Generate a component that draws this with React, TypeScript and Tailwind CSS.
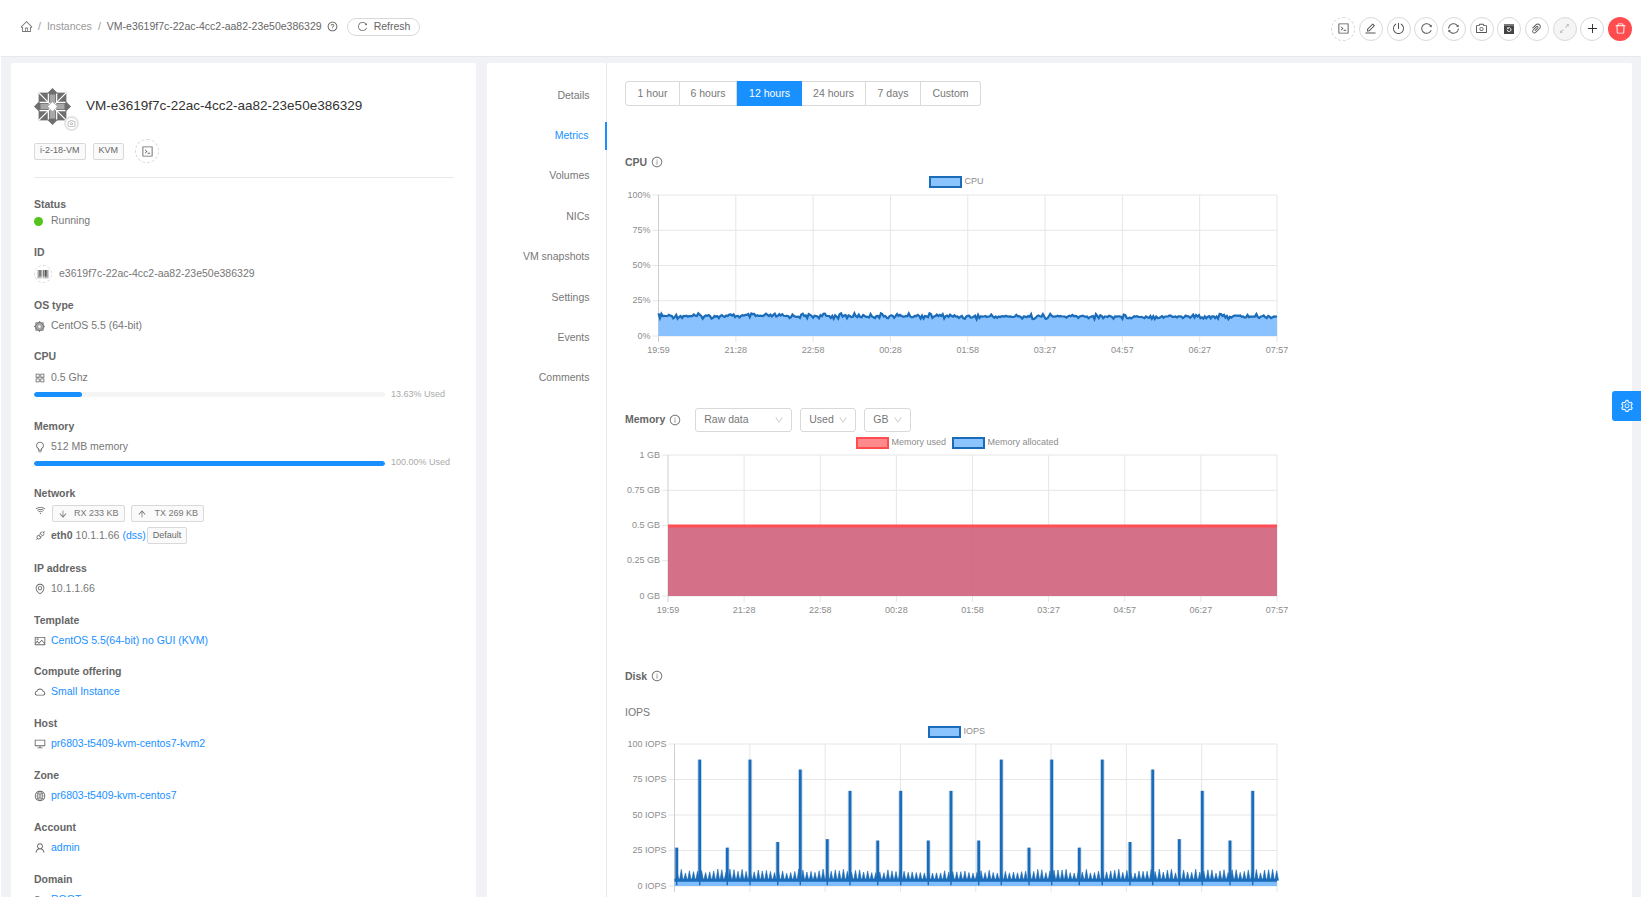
import React from "react";
import {
  AiOutlineHome,
  AiOutlineQuestionCircle,
  AiOutlineReload,
  AiOutlineCode,
  AiOutlineEdit,
  AiOutlinePoweroff,
  AiOutlineSync,
  AiOutlineCamera,
  AiOutlinePaperClip,
  AiOutlineArrowsAlt,
  AiOutlinePlus,
  AiOutlineDelete,
  AiOutlineBarcode,
  AiOutlineAppstore,
  AiOutlineBulb,
  AiOutlineWifi,
  AiOutlineArrowDown,
  AiOutlineArrowUp,
  AiOutlineApi,
  AiOutlineEnvironment,
  AiOutlinePicture,
  AiOutlineCloud,
  AiOutlineDesktop,
  AiOutlineGlobal,
  AiOutlineUser,
  AiOutlineInfoCircle,
  AiOutlineDown,
  AiOutlineSetting,
  AiOutlineFolder,
} from "react-icons/ai";

const VM_NAME = "VM-e3619f7c-22ac-4cc2-aa82-23e50e386329";
const TIMES = ["19:59", "21:28", "22:58", "00:28", "01:58", "03:27", "04:57", "06:27", "07:57"];

// small seeded noise so the charts look the same on every load
const noise = (i: number) => {
  const v = Math.sin(i * 12.9898) * 43758.5453;
  return v - Math.floor(v);
};

const CentosLogo = ({ size }: { size: number }) => (
  <svg width={size} height={size} viewBox="0 0 40 40" className="shrink-0">
    <g fill="#6e6e6e">
      <rect x="5" y="5" width="30" height="30" />
      <path d="M20 0l7 7H13zM20 40l7-7H13zM0 20l7-7v14zM40 20l-7-7v14z" />
    </g>
    <g fill="#a8a8a8">
      <path d="M17 7h6v9l-3 3-3-3zM17 33h6v-9l-3-3-3 3zM7 17v6h9l3-3-3-3zM33 17v6h-9l-3-3 3-3z" />
    </g>
    <g stroke="#fff" strokeWidth="1.3" fill="none">
      <path d="M5 5l30 30M35 5L5 35" />
      <path d="M15.5 6v9.5H6M24.5 6v9.5H34M15.5 34v-9.5H6M24.5 34v-9.5H34" />
    </g>
    <path d="M20 15l5 5-5 5-5-5z" fill="#fff" />
  </svg>
);

const CircleBtn = ({
  children,
  dashed,
  danger,
  disabled,
}: {
  children: React.ReactNode;
  dashed?: boolean;
  danger?: boolean;
  disabled?: boolean;
}) => (
  <div
    className={`flex items-center justify-center w-[24px] h-[24px] rounded-full text-[13px] ${
      danger
        ? "bg-[#ff4d4f] text-white"
        : disabled
          ? "bg-[#f5f5f5] border border-[#d9d9d9] text-[#bfbfbf]"
          : dashed
            ? "border border-dashed border-[#d9d9d9] text-[#555]"
            : "border border-[#d9d9d9] text-[#555]"
    }`}
  >
    {children}
  </div>
);

const BackupIcon = () => (
  <svg width="12" height="12" viewBox="0 0 12 12">
    <rect x="1" y="1" width="10" height="10" fill="#444" />
    <rect x="1" y="1" width="10" height="2" fill="#777" />
    <path d="M4.2 6.8a1.9 1.9 0 1 0 .6-1.6M4.4 4.4v1.2h1.2" fill="none" stroke="#fff" strokeWidth="0.9" />
  </svg>
);

const Tag = ({ children, className = "" }: { children: React.ReactNode; className?: string }) => (
  <span
    className={`inline-flex items-center h-[17px] px-[5px] border border-[#d9d9d9] rounded-[2px] bg-[#fafafa] text-[9px] text-[#666] ${className}`}
  >
    {children}
  </span>
);

const Row = ({
  label,
  icon,
  children,
  className = "",
  link,
}: {
  label: string;
  icon: React.ReactNode;
  children: React.ReactNode;
  className?: string;
  link?: boolean;
}) => (
  <div className={className}>
    <div className="h-[16px] leading-[16px] font-bold text-[#666]">{label}</div>
    <div className={`flex items-center gap-[5px] mt-[5px] h-[16px] ${link ? "text-[#1890ff]" : ""}`}>
      <span className="flex justify-center w-[12px] text-[12px] text-[#666] shrink-0">{icon}</span>
      <span>{children}</span>
    </div>
  </div>
);

const Bar = ({ pct, label }: { pct: number; label: string }) => (
  <div className="flex items-center mt-[3.5px] h-[10px]">
    <div className="w-[351px] h-[5px] rounded-full bg-[#f5f5f5] overflow-hidden">
      <div className="h-full rounded-full bg-[#1890ff]" style={{ width: `${pct}%` }} />
    </div>
    <span className="ml-[6px] text-[9px] text-[#aaa]">{label}</span>
  </div>
);

const Sidebar = () => (
  <aside className="w-[465px] shrink-0 bg-white rounded-[2px] px-[23px] pt-[25px] text-[10.5px] text-[#777] h-[900px] overflow-hidden">
    <div className="flex items-center gap-[15px]">
      <div className="relative w-[37px] h-[37px]">
        <CentosLogo size={37} />
        <div className="absolute -right-[8px] -bottom-[6px] flex items-center justify-center w-[15px] h-[15px] rounded-full bg-white border-2 border-[#e4e4e4] text-[9px] text-[#999]">
          <AiOutlineCamera />
        </div>
      </div>
      <h1 className="text-[13.5px] text-[#333] -mt-[1px]">{VM_NAME}</h1>
    </div>
    <div className="flex items-center gap-[7px] mt-[14px]">
      <Tag>i-2-18-VM</Tag>
      <Tag className="px-[5.5px]">KVM</Tag>
      <div className="ml-[4px] flex items-center justify-center w-[24px] h-[24px] rounded-full border border-dashed border-[#d9d9d9] text-[13px] text-[#666]">
        <AiOutlineCode />
      </div>
    </div>
    <div className="h-px bg-[#e8e8e8] mt-[14px] w-[420px]" />

    <div className="mt-[19px]">
      <div className="h-[14px] leading-[14px] font-bold text-[#666]">Status</div>
      <div className="flex items-center gap-[8px] mt-[2px] h-[16px]">
        <span className="w-[9px] h-[9px] rounded-full bg-[#52c41a]" />
        <span>Running</span>
      </div>
    </div>

    <div className="mt-[16px]">
      <div className="h-[14px] leading-[14px] font-bold text-[#666]">ID</div>
      <div className="flex items-center gap-[7px] mt-[6px] h-[18px]">
        <span className="flex items-center justify-center w-[18px] h-[18px] rounded-full border border-dashed border-[#d9d9d9] text-[12px] text-[#555]">
          <AiOutlineBarcode />
        </span>
        <span>e3619f7c-22ac-4cc2-aa82-23e50e386329</span>
      </div>
    </div>

    <div className="mt-[15px]">
      <div className="h-[14px] leading-[14px] font-bold text-[#666]">OS type</div>
      <div className="flex items-center gap-[6px] mt-[6px] h-[16px]">
        <CentosLogo size={11} />
        <span>CentOS 5.5 (64-bit)</span>
      </div>
    </div>

    <Row label="CPU" icon={<AiOutlineAppstore />} className="mt-[14px] [&>div:last-child]:mt-[6px]">
      0.5 Ghz
    </Row>
    <Bar pct={13.63} label="13.63% Used" />

    <Row label="Memory" icon={<AiOutlineBulb />} className="mt-[18px]">
      512 MB memory
    </Row>
    <Bar pct={100} label="100.00% Used" />

    <div className="mt-[17px]">
      <div className="h-[16px] leading-[16px] font-bold text-[#666]">Network</div>
      <div className="flex items-start gap-[6px] mt-[4px]">
        <span className="flex justify-center w-[12px] text-[11px] text-[#666]">
          <AiOutlineWifi />
        </span>
        <Tag className="text-[#777] gap-[6px]">
          <AiOutlineArrowDown className="text-[10px]" /> RX 233 KB
        </Tag>
        <Tag className="text-[#777] gap-[8px]">
          <AiOutlineArrowUp className="text-[10px]" /> TX 269 KB
        </Tag>
      </div>
      <div className="flex items-center mt-[5px]">
        <span className="flex justify-center w-[12px] text-[11px] text-[#666]">
          <AiOutlineApi />
        </span>
        <span className="ml-[5px] font-bold text-[#666]">eth0</span>
        <span className="ml-[3px]">10.1.1.66</span>
        <span className="ml-[3px] text-[#1890ff]">(dss)</span>
        <Tag className="ml-px text-[#666]">Default</Tag>
      </div>
    </div>

    <Row label="IP address" icon={<AiOutlineEnvironment />} className="mt-[16px]">
      10.1.1.66
    </Row>
    <Row label="Template" icon={<AiOutlinePicture />} link className="mt-[15px]">
      CentOS 5.5(64-bit) no GUI (KVM)
    </Row>
    <Row label="Compute offering" icon={<AiOutlineCloud />} link className="mt-[14px]">
      Small Instance
    </Row>
    <Row label="Host" icon={<AiOutlineDesktop />} link className="mt-[15px]">
      pr6803-t5409-kvm-centos7-kvm2
    </Row>
    <Row label="Zone" icon={<AiOutlineGlobal />} link className="mt-[15px]">
      pr6803-t5409-kvm-centos7
    </Row>
    <Row label="Account" icon={<AiOutlineUser />} link className="mt-[15px]">
      admin
    </Row>
    <Row label="Domain" icon={<AiOutlineFolder />} link className="mt-[14.5px]">
      ROOT
    </Row>
  </aside>
);

const GRID = "#e6e6e6";
const TICK = "#8c8c8c";

const Legend = ({ x, y, fill, stroke, text }: { x: number; y: number; fill: string; stroke: string; text: string }) => (
  <g>
    <rect x={x} y={y} width={31} height={10} fill={fill} stroke={stroke} strokeWidth={2} />
    <text x={x + 34.5} y={y + 7} fontSize={9} fill="#8c8c8c">
      {text}
    </text>
  </g>
);

// svg coordinates below are relative to the chart column, y=0 is the top of the legend row
const Axes = ({
  left,
  top,
  bottom,
  yLabels,
  right = 652,
  showTimes = true,
}: {
  left: number;
  top: number;
  bottom: number;
  yLabels: string[];
  right?: number;
  showTimes?: boolean;
}) => {
  const stepX = (right - left) / 8;
  const stepY = (bottom - top) / (yLabels.length - 1);
  return (
    <g fontSize={9} fill={TICK} textAnchor="end">
      {yLabels.map((l, i) => (
        <g key={l}>
          <line x1={left - 6} x2={right} y1={top + i * stepY} y2={top + i * stepY} stroke={GRID} />
          <text x={left - 8} y={top + i * stepY + 2.5}>
            {l}
          </text>
        </g>
      ))}
      {TIMES.map((t, i) => (
        <g key={t}>
          <line
            x1={left + i * stepX}
            x2={left + i * stepX}
            y1={top}
            y2={bottom + 6}
            stroke={i === 0 ? "#cfcfcf" : GRID}
          />
          {showTimes && (
            <text x={left + i * stepX} y={bottom + 16.5} textAnchor="middle">
              {t}
            </text>
          )}
        </g>
      ))}
    </g>
  );
};

const CpuChart = () => {
  const left = 33.5;
  const right = 652;
  const pts: string[] = [];
  for (let i = 0; i <= 420; i++) {
    const x = left + ((right - left) * i) / 420;
    const n = noise(i) - 0.5;
    const jitter = n * Math.abs(n) * 11 + (i < 200 ? -0.5 : 0);
    pts.push(`${x.toFixed(1)},${(142.5 + jitter).toFixed(1)}`);
  }
  return (
    <svg width={670} height={190} className="block" fontFamily="Liberation Sans, sans-serif">
      <Legend x={305} y={3} fill="#8cc4ff" stroke="#1a6bb8" text="CPU" />
      <Axes left={left} top={21} bottom={162} yLabels={["100%", "75%", "50%", "25%", "0%"]} />
      <polygon points={`${left},162 ${pts.join(" ")} ${right},162`} fill="#7fbdff" fillOpacity={0.92} />
      <polyline points={pts.join(" ")} fill="none" stroke="#1a6bb8" strokeWidth={2.2} />
    </svg>
  );
};

const MemoryChart = () => (
  <svg width={670} height={190} className="block" fontFamily="Liberation Sans, sans-serif">
    <Legend x={232} y={4} fill="#ff8a8c" stroke="#ff4d4f" text="Memory used" />
    <Legend x={328} y={4} fill="#8cc4ff" stroke="#1a6bb8" text="Memory allocated" />
    <Axes left={43} top={21} bottom={162} yLabels={["1 GB", "0.75 GB", "0.5 GB", "0.25 GB", "0 GB"]} />
    <rect x={43} y={92} width={609} height={70} fill="#d0657f" fillOpacity={0.92} />
    <line x1={43} x2={652} y1={92} y2={92} stroke="#ff4d55" strokeWidth={3} />
  </svg>
);

// peak positions and heights read off the picture, in page pixels and percent
const SPIKES: [number, number][] = [
  [676.7, 27], [699.7, 89], [727.3, 27], [750, 89], [777.7, 31], [800.3, 82], [827.3, 33], [850, 67],
  [877.7, 32], [900.7, 67], [928.3, 32], [951, 67], [978.7, 32], [1001.3, 89], [1029, 27], [1051.7, 89],
  [1079.3, 27], [1102.3, 89], [1130, 31], [1152.7, 82], [1179.3, 33], [1202.3, 67], [1230, 32], [1252.7, 67],
];

const IopsChart = () => {
  const ox = 625; // drawing origin on the page
  const left = 674.5 - ox;
  const right = 1277 - ox;
  const top = 32;
  const bottom = 174;
  const val = (v: number) => bottom - (v / 100) * (bottom - top);
  const base = val(4);
  const small: string[] = [];
  for (let x = left + 1, i = 0; x < right; x += 4.05, i++) {
    const h = 9 + noise(i) * 3;
    small.push(`${x.toFixed(1)},${base} ${(x + 1.8).toFixed(1)},${val(h).toFixed(1)} ${(x + 3.6).toFixed(1)},${base}`);
  }
  return (
    <svg width={670} height={184} className="block" fontFamily="Liberation Sans, sans-serif">
      <Legend x={304} y={15} fill="#8cc4ff" stroke="#1a6bb8" text="IOPS" />
      <Axes left={left} top={top} bottom={bottom} right={right} showTimes={false} yLabels={["100 IOPS", "75 IOPS", "50 IOPS", "25 IOPS", "0 IOPS"]} />
      <rect x={left} y={base} width={right - left} height={bottom - base} fill="#7fbdff" />
      {SPIKES.map(([sx, v]) => (
        <g key={sx}>
          <line x1={sx - ox} x2={sx - ox} y1={val(v)} y2={base} stroke="#1a6bb8" strokeOpacity={0.25} strokeWidth={4.5} />
          <line x1={sx - ox} x2={sx - ox} y1={val(v)} y2={base} stroke="#1a6bb8" strokeWidth={2.7} />
          <line x1={sx - ox} x2={sx - ox} y1={base} y2={val(0.5)} stroke="#1a6bb8" strokeWidth={1.4} />
        </g>
      ))}
      {small.map((p, i) => (
        <polygon key={i} points={p} fill="#1a6bb8" stroke="#1a6bb8" strokeWidth={0.6} />
      ))}
      <line x1={left} x2={right} y1={base} y2={base} stroke="#1a6bb8" strokeWidth={3} />
    </svg>
  );
};

const Select = ({ text, className }: { text: string; className: string }) => (
  <div className={`flex items-center justify-between h-[24px] pl-[8px] pr-[7px] border border-[#d9d9d9] rounded-[3px] text-[10.5px] text-[#777] ${className}`}>
    {text}
    <AiOutlineDown className="text-[10px] text-[#bfbfbf]" />
  </div>
);

const SectionTitle = ({ title }: { title: string }) => (
  <span className="inline-flex items-center gap-[4px] font-bold text-[#666]">
    {title}
    <AiOutlineInfoCircle className="text-[12px] text-[#777]" />
  </span>
);

const TABS = ["Details", "Metrics", "Volumes", "NICs", "VM snapshots", "Settings", "Events", "Comments"];
const RANGES = [
  ["1 hour", "w-[55px]"],
  ["6 hours", "w-[57px]"],
  ["12 hours", "w-[65px]"],
  ["24 hours", "w-[64px]"],
  ["7 days", "w-[55px]"],
  ["Custom", "w-[60px]"],
];

const App = () => (
  <div className="h-[897px] overflow-hidden bg-white pl-px font-['Liberation_Sans',sans-serif]">
    <div className="h-full bg-[#f0f2f5]">
      <header className="flex items-center justify-between h-[57px] bg-white border-b border-[#e8e8e8] pl-[19px] pr-[9px] text-[10.5px] text-[#777]">
        <div className="flex items-center -mt-[3px]">
          <AiOutlineHome className="text-[13px] text-[#777]" />
          <span className="ml-[5px] mr-[6px] text-[#999]">/</span>
          <span className="text-[#999]">Instances</span>
          <span className="mx-[6px] text-[#999]">/</span>
          <span className="text-[#666]">{VM_NAME}</span>
          <AiOutlineQuestionCircle className="ml-[5px] text-[11px] text-[#555]" />
          <div className="ml-[9px] flex items-center gap-[6px] h-[18px] px-[9px] rounded-full border border-[#d9d9d9] text-[#666]">
            <AiOutlineReload className="text-[11px]" /> Refresh
          </div>
        </div>
        <div className="flex items-center gap-[3.7px] mt-[1px]">
          <CircleBtn dashed><AiOutlineCode /></CircleBtn>
          <CircleBtn><AiOutlineEdit /></CircleBtn>
          <CircleBtn><AiOutlinePoweroff /></CircleBtn>
          <CircleBtn><AiOutlineReload /></CircleBtn>
          <CircleBtn><AiOutlineSync /></CircleBtn>
          <CircleBtn><AiOutlineCamera /></CircleBtn>
          <CircleBtn><BackupIcon /></CircleBtn>
          <CircleBtn><AiOutlinePaperClip /></CircleBtn>
          <CircleBtn disabled><AiOutlineArrowsAlt /></CircleBtn>
          <CircleBtn><AiOutlinePlus className="text-[#333]" /></CircleBtn>
          <CircleBtn danger><AiOutlineDelete /></CircleBtn>
        </div>
      </header>

      <main className="flex gap-[11px] pl-[10px] pr-[9px] pt-[6px]">
        <Sidebar />
        <section className="flex-1 flex bg-white rounded-[2px] text-[10.5px] text-[#777] h-[900px] overflow-hidden">
          <nav className="w-[120px] shrink-0 pt-[18.5px] border-r border-[#e8e8e8] flex flex-col gap-[12.4px] items-stretch">
            {TABS.map((t) => (
              <div
                key={t}
                className={`flex items-center justify-end h-[28px] pr-[16.5px] ${
                  t === "Metrics" ? "text-[#1890ff] border-r-2 border-[#1890ff] -mr-px" : ""
                }`}
              >
                {t}
              </div>
            ))}
          </nav>
          <div className="flex-1 pl-[18px] pt-[18px]">
            <div className="flex">
              {RANGES.map(([t, w], i) => (
                <div
                  key={t}
                  className={`flex items-center justify-center h-[25px] ${w} ${
                    t === "12 hours"
                      ? "bg-[#1890ff] text-white"
                      : `border-y border-r border-[#d9d9d9] ${i === 0 ? "border-l rounded-l-[3px]" : ""} ${i === 5 ? "rounded-r-[3px]" : ""}`
                  }`}
                >
                  {t}
                </div>
              ))}
            </div>

            <div className="mt-[49px] h-[14px] leading-[14px]">
              <SectionTitle title="CPU" />
            </div>
            <div className="mt-[5px]">
              <CpuChart />
            </div>

            <div className="flex items-center mt-[44px] h-[24px]">
              <SectionTitle title="Memory" />
              <Select text="Raw data" className="w-[97px] ml-[14px]" />
              <Select text="Used" className="w-[56px] ml-[8px]" />
              <Select text="GB" className="w-[47px] ml-[8px]" />
            </div>
            <div className="mt-[2px]">
              <MemoryChart />
            </div>

            <div className="mt-[45px] h-[14px] leading-[14px]">
              <SectionTitle title="Disk" />
            </div>
            <div className="mt-[22px] h-[14px] leading-[14px]">IOPS</div>
            <div className="-mt-[7px]">
              <IopsChart />
            </div>
          </div>
        </section>
      </main>
    </div>

    <div className="fixed right-0 top-[391px] flex items-center justify-center w-[29px] h-[30px] rounded-l-[3px] bg-[#1890ff] text-[14px] text-white">
      <AiOutlineSetting />
    </div>
  </div>
);

export default App;
